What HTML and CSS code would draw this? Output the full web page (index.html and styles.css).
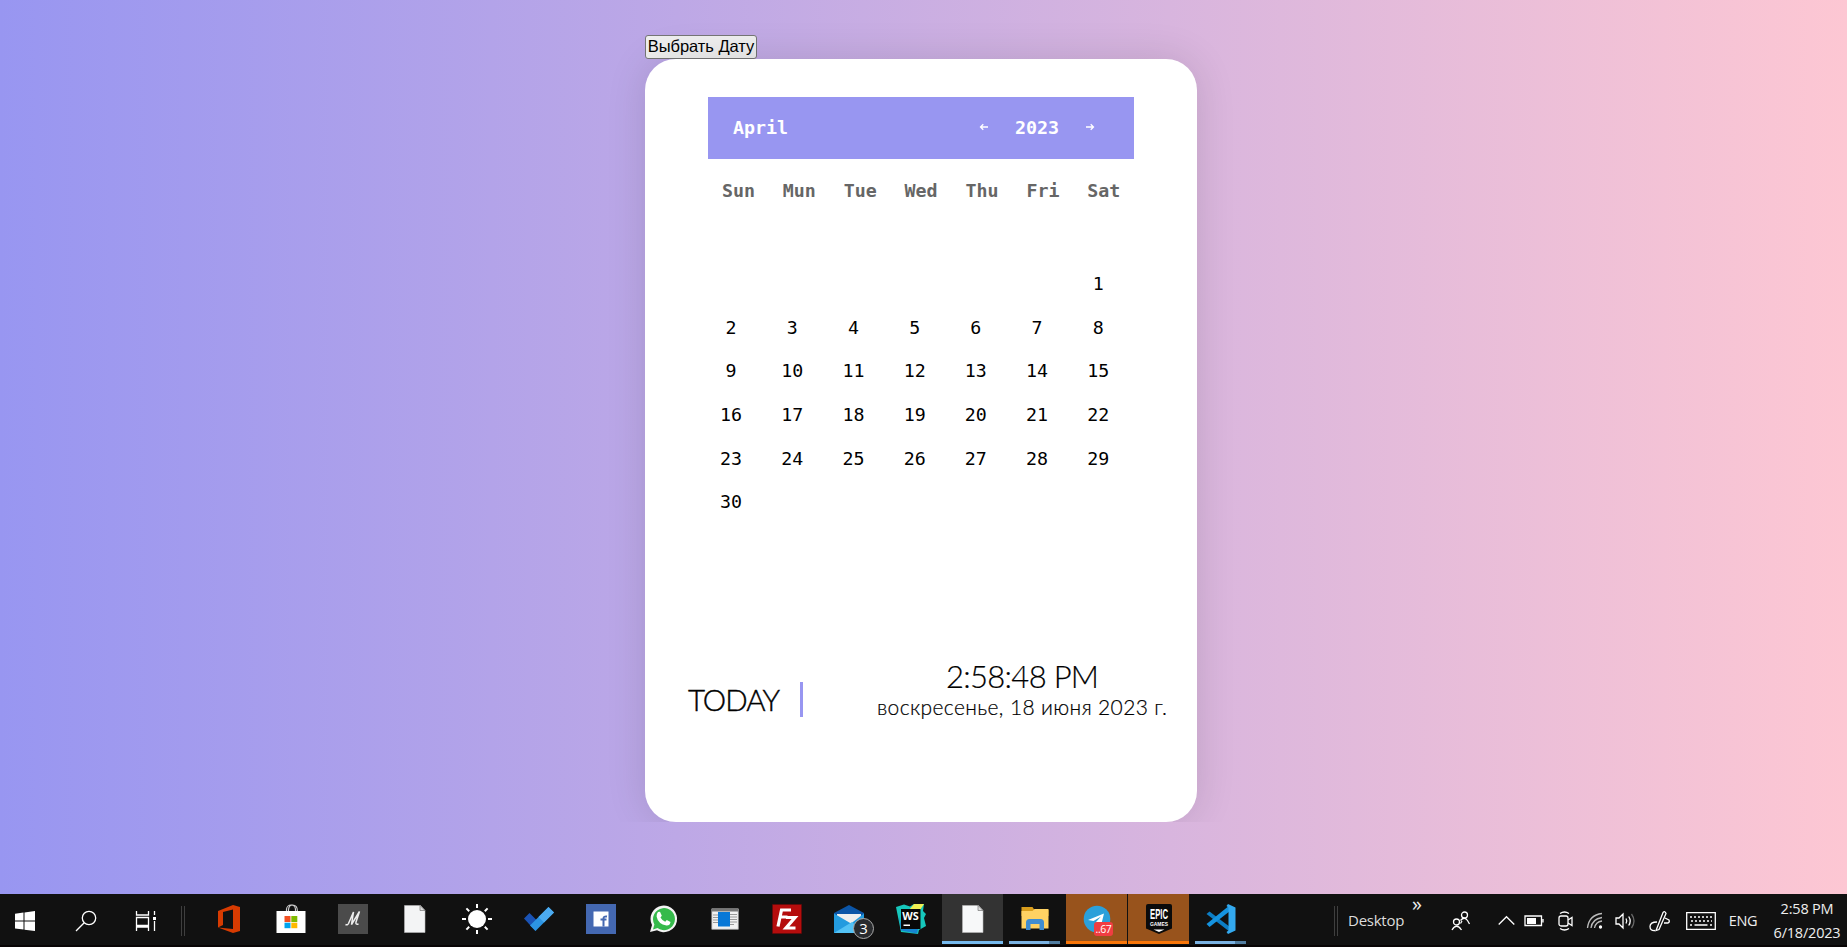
FILE: index.html
```html
<!DOCTYPE html>
<html lang="ru">
<head>
<meta charset="utf-8">
<title>Calendar</title>
<link rel="stylesheet" href="styles.css">
</head>
<body>
<main class="desktop">
  <div class="wrapper">
    <button class="pick" type="button">Выбрать Дату</button>
    <div class="clip">
    <section class="card">
      <header class="head">
        <span class="month">April</span>
        <svg class="arrow" viewBox="0 0 10 8"><path d="M9 4H1.500M4.300 1.200L1.500 4l2.800 2.800"/></svg>
        <span class="year">2023</span>
        <svg class="arrow" viewBox="0 0 10 8"><path d="M1 4h7.500M5.700 1.200L8.500 4 5.700 6.800"/></svg>
      </header>
      <div class="week"><span>Sun</span><span>Mun</span><span>Tue</span><span>Wed</span><span>Thu</span><span>Fri</span><span>Sat</span></div>
      <div class="days">
        <span class="first">1</span><span>2</span><span>3</span><span>4</span><span>5</span><span>6</span><span>7</span><span>8</span><span>9</span><span>10</span><span>11</span><span>12</span><span>13</span><span>14</span><span>15</span><span>16</span><span>17</span><span>18</span><span>19</span><span>20</span><span>21</span><span>22</span><span>23</span><span>24</span><span>25</span><span>26</span><span>27</span><span>28</span><span>29</span><span>30</span>
      </div>
      <footer class="foot">
        <div class="today"><span>TODAY</span></div>
        <div class="now"><div class="time">2:58:48 PM</div><div class="date">воскресенье, 18 июня 2023 г.</div></div>
      </footer>
    </section>
    </div>
  </div>
</main>
<nav class="taskbar">
  <div class="sys"><svg width="20" height="20" viewBox="0 0 20 20"><path fill="#fff" d="M0 2.800l8.500-1.200v8H0zM9.500 1.400L20 0v9.600H9.500zM0 10.600h8.500v8L0 17.400zM9.500 10.600H20V20L9.500 18.700z"/></svg></div>
  <div class="sys"><svg class="line" width="22" height="22" viewBox="0 0 22 22"><circle cx="14" cy="8" r="6.700"/><path d="M9.200 12.800L1 21"/></svg></div>
  <div class="sys"><svg class="line" width="22" height="20" viewBox="0 0 22 20"><path d="M1.500 0v4h12V0M1.500 20v-4h12v4M1.500 6.500h12v8h-12zM19.500 0v4M19.500 10v10"/><path d="M18 6h3v3h-3z" fill="#fff" stroke="none"/></svg></div>
  <div class="grip"></div>
  <div class="apps">
    <div class="app"><svg viewBox="0 0 30 30"><path fill="#d83b01" d="M4 7L19 1l7 2v24l-7 2L4 23.500 19 25V5.500L9 8v13l-5 2.500z"/></svg></div>
    <div class="app"><svg viewBox="0 0 30 30"><path d="M10.500 10V5.500a4.500 4.500 0 0 1 9 0V10M12.500 8V5.500Q13 1 16.500 1q5 0 5 6.500" fill="none" stroke="#ccc" stroke-width="1.200"/><path fill="#fff" d="M.5 7h29v22h-29z"/><path fill="#f25022" d="M8.500 12h6v6h-6z"/><path fill="#7fba00" d="M15.300 12h6v6h-6z"/><path fill="#00a4ef" d="M8.500 18.700h6v5.500h-6z"/><path fill="#ffb900" d="M15.300 18.700h6v5.500h-6z"/></svg></div>
    <div class="app"><svg viewBox="0 0 30 30"><path fill="#4b4b4b" d="M0 0h30v30H0z"/><path d="M7.500 20.500q2 1 3-1L15.500 8l-2 12.500L21.500 7.500 18 18q-.7 3 2.500 2" fill="none" stroke="#eee" stroke-width="1.500" stroke-linejoin="bevel"/></svg></div>
    <div class="app"><svg viewBox="0 0 30 30"><path fill="#f3f4f5" stroke="#b9b9b9" stroke-width=".6" d="M4.500 1.500h16L25 6.500v22H4.500z"/><path fill="#ddd" stroke="#777" stroke-width=".7" d="M20 1.500v5h5z"/></svg></div>
    <div class="app"><svg viewBox="0 0 30 30"><circle cx="15" cy="15" r="9" fill="#fff"/><path stroke="#fff" stroke-width="2" d="M15 0v4M15 26v4M0 15h4M26 15h4M4.400 4.400l2.800 2.800M22.800 22.800l2.800 2.800M4.400 25.600l2.800-2.800M22.800 7.200l2.800-2.800"/></svg></div>
    <div class="app"><svg viewBox="0 0 30 30"><path fill="#1a53b5" d="M0 14.500L5.500 9l9 9-3 9z"/><path fill="#2c94e3" d="M24.500 3L30 8.500 11.500 27 6 21.500z"/><path fill="#4cabf0" d="M24.500 3L30 8.500 20 18.500 14.500 13z"/></svg></div>
    <div class="app"><svg viewBox="0 0 30 30"><path fill="#4468b1" d="M0 0h30v30H0z"/><path fill="#fff" d="M7.500 7.500h15v15h-15z"/><path d="M17.500 22.500v-8q0-2.500 3.500-2M14.500 15.500h6" fill="none" stroke="#4468b1" stroke-width="2"/></svg></div>
    <div class="app"><svg viewBox="0 0 30 30"><path fill="#f4f4f4" d="M2 28l2-7A13.300 13.300 0 1 1 9 26.300z"/><path fill="#35ba4b" d="M5 25.500l1.400-5A11 11 0 1 1 9.500 24z"/><path fill="#fff" d="M10 8l2-.3 1.800 4-1.300 1.800q1.600 3 4.700 4.300l1.600-1.800 3.700 2q-.5 3.700-4 3.500Q10 20 8.600 12.500 8.500 9.500 10 8z"/></svg></div>
    <div class="app"><svg viewBox="0 0 30 30"><path fill="#f1f1f1" stroke="#aaa" stroke-width=".7" d="M1.800 4.800h26.500v20.500H1.800z"/><path fill="#777" d="M2 5h26v2.500H2z"/><path stroke="#999" stroke-width="1" d="M3 11h5M3 13.500h5M3 16h5M3 18.500h5M20 10.500h7M20 13h7M20 15.500h7M20 18h7M20 20.500h4"/><path fill="#0878d7" d="M8 8h12v14.500H8z"/></svg></div>
    <div class="app"><svg viewBox="0 0 30 30"><path fill="#b50d0d" stroke="#690606" stroke-dasharray="1 1" d="M.5.500h29v29H.5z"/><path d="M6 22.500L9.500 6H19M7.500 13h8M14 13.500h9L14 24h9.500" fill="none" stroke="#fff" stroke-width="3.200"/></svg></div>
    <div class="app"><svg viewBox="0 0 30 30"><path fill="#0b55a7" d="M0 9L15 1l15 8v5H0z"/><path fill="#eee" d="M3 10h24v9H3z"/><path fill="#239bdf" d="M0 9.500l17 10L30 9.500V29H0z"/><path fill="#53c2f5" d="M0 29L18 18 30 29z"/></svg><span class="badge">3</span></div>
    <div class="app"><svg viewBox="0 0 30 30"><path fill="#16c7bc" d="M0 3l8-2.500 6 2L18 0h10l-1 7 3 3-2 4 2 8-7 4-1 4-17-2z"/><path fill="#f1ef52" d="M18 0h10l-4 6h-11z"/><path fill="#1784d2" d="M3 12l3 12 16 1-1 4.500-16-3z"/><path fill="#080808" d="M5 5h19.500v20H5z"/><path fill="#fff" d="M7.500 20.500H14V22H7.500z"/><text x="6.300" y="15.800" class="ws" textLength="16.500" lengthAdjust="spacingAndGlyphs">WS</text></svg></div>
    <div class="app current"><svg viewBox="0 0 30 30"><path fill="#f7f8f9" stroke="#b9b9b9" stroke-width=".6" d="M4.500 1.500h16L25 6.500v22H4.500z"/><path fill="#ddd" stroke="#777" stroke-width=".7" d="M20 1.500v5h5z"/></svg></div>
    <div class="app open"><svg viewBox="0 0 30 30"><path fill="#d99d1c" d="M1.500 3h11l2 3h14v6h-27z"/><path fill="#ffd263" d="M1.500 7h11l2-2h14v19.500h-27z"/><path fill="#3f8dd1" d="M6 26v-7.500q0-3.500 3.500-3.500h11q3.500 0 3.500 3.500V26h-4.500v-6h-9v6z"/></svg></div>
    <div class="app alert"><svg viewBox="0 0 30 30"><circle cx="15" cy="15" r="13.300" fill="#2ba0da"/><path fill="#fff" d="M6 16L22 9.500l-3 12-5-3.500 5-5.500-7.500 4.500z"/></svg><span class="count">..67</span></div>
    <div class="app alert"><svg viewBox="0 0 30 30"><path fill="#0b0b0b" d="M2 2q0-2 2-2h22q2 0 2 2v22.500L15 30 2 24.500z"/><path fill="#fff" d="M9.500 25.500h11L15 28z"/><text x="6" y="15" class="epic" textLength="18" lengthAdjust="spacingAndGlyphs">EPIC</text><text x="6" y="22" class="games" textLength="18" lengthAdjust="spacingAndGlyphs">GAMES</text></svg></div>
    <div class="app open"><svg viewBox="0 0 30 30"><path fill="#0c7dc4" d="M3.500 7.500L24 23v5L.5 10z"/><path fill="#1593df" d="M3.500 23L24 7V1L.5 20z"/><path fill="#33a9ef" d="M22 0l7.500 3.500v23L22 30l-1.500-2 2-1.500v-23l-2-1.500z"/></svg></div>
  </div>
  <div class="grip toolbar"></div>
  <span class="desk">Desktop</span>
  <span class="more">»</span>
  <div class="tray">
    <div class="t people"><svg class="line" width="20" height="20" viewBox="0 0 20 20"><circle cx="13.500" cy="4" r="3"/><circle cx="5.500" cy="11" r="3"/><path d="M9.500 9.500q4-4.500 7 0l2 3.500M1 19q4.500-7.500 9.500 0M11 10l-1.500 2.500"/></svg></div>
    <div class="t chev"><svg class="line" width="17" height="9" viewBox="0 0 17 9"><path d="M.7 8.500l7.800-7.800 7.800 7.800"/></svg></div>
    <div class="t batt"><svg class="line" width="20" height="12" viewBox="0 0 20 12"><path d="M1 1h16.500v9.500H1zM19 4v3.500"/><path fill="#fff" stroke="none" d="M3 3h9v6H3z"/></svg></div>
    <div class="t cam"><svg class="line" width="16" height="20" viewBox="0 0 16 20"><rect x="1" y="5" width="9" height="10" rx="2"/><path d="M10 9l4-2.500v8L10 12M2 2.500q4.500-3 9 0M2 17.500q4.500 3 9 0"/></svg></div>
    <div class="t wifi"><svg class="line" width="18" height="18" viewBox="0 0 18 18"><g stroke="#bbb"><path d="M1.500 16Q3 3 16 1.500M5 16Q6 7 16 5.500M8.500 16q1-6 7.500-7"/></g><circle cx="14.500" cy="15" r="1" fill="#fff"/></svg></div>
    <div class="t sound"><svg class="line" width="21" height="18" viewBox="0 0 21 18"><path d="M1 6h3l4-4v14l-4-4H1zM11 6.500q1.500 2.500 0 5M13.700 4.500q3 4.500 0 9"/><path stroke="#666" d="M16.500 2q5 7 0 14"/></svg></div>
    <div class="t pen"><svg class="line" width="22" height="20" viewBox="0 0 22 20"><path d="M8 17l-1 2.500 3-1L17 2.500Q16-.5 14 1.500zM8 11q-7 0-7 4.500t5 4M15 12h4q2-1 1-3l-4-2"/></svg></div>
    <div class="t keys"><svg class="line" width="30" height="18" viewBox="0 0 30 18"><path d="M.7.700h28.600v16.600H.7z"/><path stroke-dasharray="2 2" d="M4 5h22M5 9h21"/><path d="M4 13h2M8.500 13h13M24 13h2"/></svg></div>
    <div class="t lang">ENG</div>
    <div class="clock"><span class="hm">2:58 PM</span><span class="dmy">6/18/2023</span></div>
  </div>
</nav>
</body>
</html>
```
FILE: styles.css
```css
* { box-sizing: border-box; }
body { margin: 0; height: 947px; overflow: hidden; display: flex; flex-direction: column; background: #111; }
svg { display: block; flex: none; overflow: visible; }
.desktop { height: 894px; padding-top: 35px; background: linear-gradient(to right, #9896f1, #fdc7d3); }
.wrapper { width: 552px; margin-left: 645px; }
.pick { display: block; width: 112px; height: 24px; padding: 0 0 2px; border: 1px solid #767676; border-radius: 3px; background: #efefef; color: #000; font: 16.500px/20px "Liberation Sans", Arial, sans-serif; white-space: nowrap; text-align: center; letter-spacing: -.05px; }
.clip { clip-path: inset(-60px -60px 0 -60px); }
.card { height: 763px; padding: 38px 63px 0; border-radius: 31px; background: #fff; box-shadow: 0 0 40px rgba(0, 0, 0, .12); font-family: "DejaVu Sans Mono", monospace; }
.head { height: 62px; padding: 0 39px 2px 25px; display: flex; align-items: center; background: #9896f1; color: #fff; font-size: 18.300px; font-weight: 700; }
.month { margin-right: auto; }
.year { margin: 0 26px 0 26px; }
.arrow { width: 10px; height: 8px; fill: none; stroke: #fff; stroke-width: 1.300; }
.week { height: 62px; display: grid; grid-template-columns: repeat(7, 60.900px); align-items: center; text-align: center; color: #666; font-size: 18.300px; font-weight: 700; }
.days { height: 310px; margin: 41px 0 0 -7.500px; display: grid; grid-template-columns: repeat(7, 61.200px); grid-auto-rows: 43.700px; align-content: start; align-items: center; text-align: center; font-size: 18.300px; line-height: 22px; color: #000; }
.first { grid-column: 7; }
.foot { height: 70px; margin: 86px -36px 0 -20px; display: flex; font-family: Lato, sans-serif; color: #000; }
.today { width: 117px; height: 35px; margin-top: 24px; border-right: 3px solid #9896f1; font-size: 29.500px; line-height: 35px; font-weight: 300; letter-spacing: -1px; -webkit-text-stroke: .4px #000; }
.now { width: 300px; margin-left: 71px; text-align: center; white-space: nowrap; }
.time { font-size: 31px; line-height: 36px; font-weight: 300; letter-spacing: -.7px; -webkit-text-stroke: .2px #000; }
.date { font-size: 21px; line-height: 26px; font-weight: 300; letter-spacing: .37px; -webkit-text-stroke: .2px #000; }
.taskbar { height: 53px; display: flex; background: #111; border-bottom: 2px solid #080405; color: #eee; font-family: "Open Sans", "Noto Sans", sans-serif; }
.taskbar > *, .t, .clock { flex: none; }
.sys { width: 60px; height: 53px; display: flex; align-items: center; justify-content: center; }
.sys:first-child { width: 56px; padding-right: 6px; }
.line { fill: none; stroke: #fff; stroke-width: 1.300; }
.grip { width: 4px; height: 30px; margin: 12px 13px 0 5px; border: solid #3f3f3f; border-width: 0 1px; }
.apps { display: flex; }
.app { position: relative; width: 61px; height: 50px; margin-right: 1px; padding-top: 10px; display: flex; justify-content: center; }
.app svg { width: 30px; height: 30px; }
.current { background: #333; border-bottom: 3px solid #76b9ed; }
.open { background: linear-gradient(to right, #7ab2e2 40px, #517da0 40px) 5px 47px / 51px 3px no-repeat; }
.alert { background: #98531c; border-bottom: 3px solid #f97609; }
.badge { position: absolute; left: 35px; top: 24px; width: 21px; height: 21px; border: 1px solid #aaa; border-radius: 50%; background: #292b2e; color: #fff; font-size: 15px; line-height: 18px; text-align: center; }
.count { position: absolute; left: 28px; top: 28px; width: 19px; height: 14px; border-radius: 3px; background: #f03d42; color: #fff; font-size: 10.500px; line-height: 14px; text-align: center; letter-spacing: -.4px; }
.ws { fill: #fff; font: 700 10.500px "Open Sans", sans-serif; }
.epic { fill: #fff; font: 700 14px "Liberation Sans", sans-serif; }
.games { fill: #fff; font: 700 5.500px "Liberation Sans", sans-serif; }
.toolbar { margin: 12px 10px 0 82px; }
.desk { width: 64px; font-size: 15px; line-height: 53px; letter-spacing: -.25px; color: #ddd; }
.more { width: 12px; font-size: 20px; line-height: 20px; }
.tray { height: 53px; display: flex; align-items: center; }
.t { display: flex; align-items: center; justify-content: center; height: 53px; }
.people { width: 73px; }
.chev { width: 18px; }
.batt { width: 38px; }
.cam { width: 26px; }
.wifi { width: 32px; }
.sound { width: 28px; }
.pen { width: 42px; }
.keys { width: 40px; }
.lang { width: 44px; font-size: 14.500px; letter-spacing: -.4px; }
.clock { width: 82px; padding-left: 2px; display: flex; flex-direction: column; align-items: center; font-size: 14.500px; line-height: 24px; white-space: nowrap; letter-spacing: -.2px; }
```
